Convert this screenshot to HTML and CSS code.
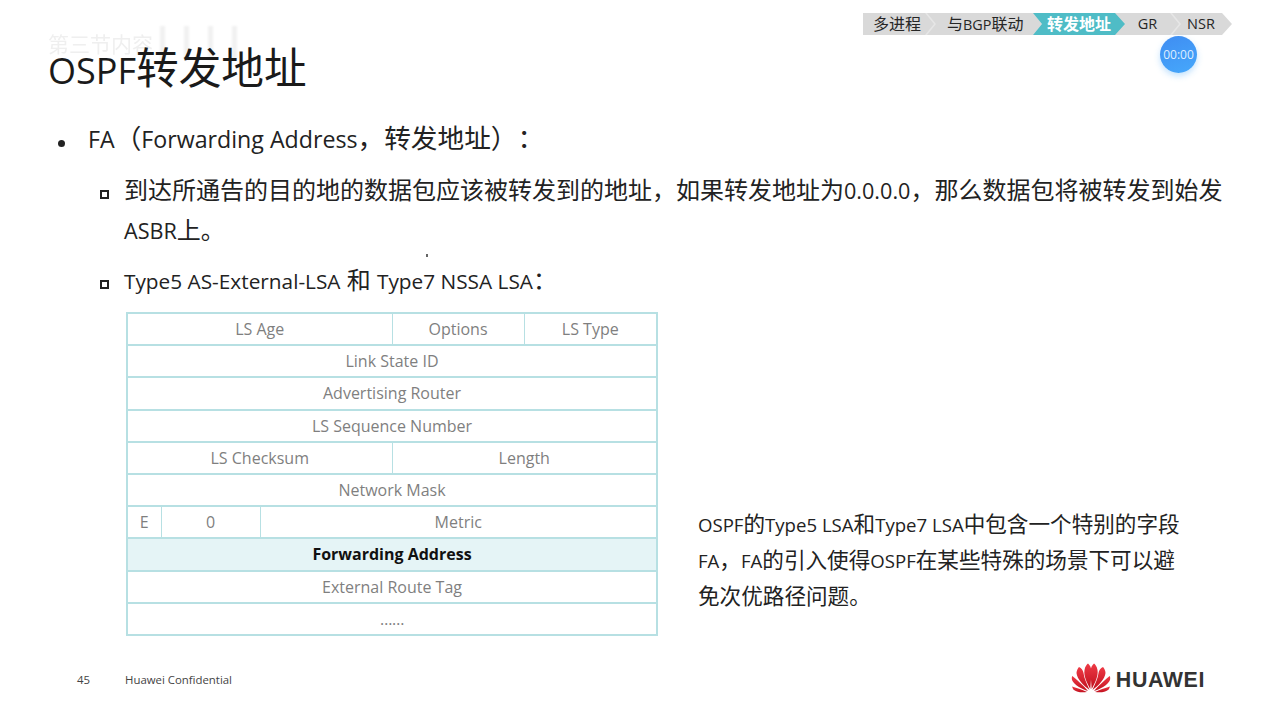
FILE: index.html
```html
<!DOCTYPE html>
<html lang="zh-CN">
<head>
<meta charset="utf-8">
<title>OSPF转发地址</title>
<link rel="stylesheet" href="styles.css">
</head>
<body>
<main class="slide">
  <nav class="crumbs">
    <span class="crumb c1">多进程</span>
    <span class="crumb c2">与<span class="lat">BGP</span>联动</span>
    <span class="crumb c3 active">转发地址</span>
    <span class="crumb c4">GR</span>
    <span class="crumb c5">NSR</span>
  </nav>
  <div class="timer">00:00</div>
  <header class="head">
    <div class="ghost">第三节内容</div>
    <div class="ghost-bars"></div>
    <h1 class="title"><span class="lat">OSPF</span>转发地址</h1>
  </header>
  <section class="bullets">
    <p class="l1"><span class="dot"></span><span class="lat">FA</span>（<span class="lat">Forwarding Address</span>，转发地址）：</p>
    <div class="l2 first"><span class="sq"></span><p>到达所通告的目的地的数据包应该被转发到的地址，如果转发地址为<span class="lat">0.0.0.0</span>，那么数据包将被转发到始发<span class="lat">ASBR</span>上。</p></div>
    <div class="l2 second"><span class="sq"></span><p><span class="lat">Type5 AS-External-LSA</span> 和 <span class="lat">Type7 NSSA LSA</span>：</p></div>
  </section>
  <span class="speck"></span>
  <section class="content">
    <table class="lsa">
      <colgroup>
        <col class="w1"><col class="w2"><col class="w3"><col class="w4"><col class="w5">
      </colgroup>
      <tr><td colspan="3">LS Age</td><td>Options</td><td>LS Type</td></tr>
      <tr><td colspan="5">Link State ID</td></tr>
      <tr><td colspan="5">Advertising Router</td></tr>
      <tr><td colspan="5">LS Sequence Number</td></tr>
      <tr><td colspan="3">LS Checksum</td><td colspan="2">Length</td></tr>
      <tr><td colspan="5">Network Mask</td></tr>
      <tr><td>E</td><td>0</td><td colspan="3">Metric</td></tr>
      <tr class="hl"><td colspan="5">Forwarding Address</td></tr>
      <tr><td colspan="5">External Route Tag</td></tr>
      <tr><td colspan="5" class="more">……</td></tr>
    </table>
    <p class="note"><span class="lat">OSPF</span>的<span class="lat">Type5 LSA</span>和<span class="lat">Type7 LSA</span>中包含一个特别的字段<br><span class="lat">FA</span>，<span class="lat">FA</span>的引入使得<span class="lat">OSPF</span>在某些特殊的场景下可以避<br>免次优路径问题。</p>
  </section>
  <footer class="foot">
    <span class="page">45</span>
    <span class="conf">Huawei Confidential</span>
    <div class="logo">
      <svg class="petals" viewBox="0 0 40 30" width="40" height="30" aria-hidden="true">
        <defs>
          <linearGradient id="pg" x1="0" y1="0" x2="0" y2="1">
            <stop offset="0" stop-color="#ee3a45"/>
            <stop offset="1" stop-color="#c0101e"/>
          </linearGradient>
          <g id="half" fill="url(#pg)">
            <path d="M20.7 26C24 20 27.5 13 26.5 7C26 3.5 24 1 23 .5C21 2 19.5 5 19.6 9C19.8 15 20.3 20 20.7 26Z"/>
            <path d="M21.5 27C27 23 34 16 34.5 10C34.5 7.5 33 5 32 4C29.5 5 27.8 7.5 27.5 10C27 15 24 21 21.5 27Z"/>
            <path d="M23 28C29 26 37 22 39 17C39.5 15 39 13.5 38.7 13C35 16 28 22 23 28Z"/>
            <path d="M24 29C29 29.5 34 29.5 37 27C38 26 38.7 24.5 39 23.5C34 25 28 27 24 29Z"/>
          </g>
        </defs>
        <use href="#half"/>
        <use href="#half" transform="matrix(-1 0 0 1 40 0)"/>
      </svg>
      <span class="brand">HUAWEI</span>
    </div>
  </footer>
</main>
</body>
</html>
```
FILE: styles.css
```css
* { box-sizing: border-box; }
html, body { margin: 0; padding: 0; background: #fff; }
body {
  font-family: "Open Sans", "Noto Sans CJK SC", sans-serif;
  color: #222;
  text-spacing-trim: space-all;
}
p, h1 { margin: 0; }
.lat { line-height: 1; }
.slide {
  position: relative;
  width: 1280px;
  height: 720px;
  overflow: hidden;
  background: #fff;
  padding: 0 48px;
}

/* top-right chevron navigator */
.crumbs {
  position: absolute;
  left: 863px;
  top: 13px;
  width: 369px;
  height: 22px;
  display: flex;
  background: #d9d9d9;
  clip-path: polygon(0 0, calc(100% - 10px) 0, 100% 50%, calc(100% - 10px) 100%, 0 100%);
  font-size: 16px;
  line-height: 22px;
  color: #262626;
}
.crumbs .lat { font-size: 14.4px; }
.crumb {
  position: relative;
  display: block;
  text-align: center;
  white-space: nowrap;
}
.crumb::after {
  content: "";
  position: absolute;
  right: -11px;
  top: 0;
  width: 11px;
  height: 22px;
  background: #e6e6e6;
  clip-path: polygon(0 0, 2px 0, 11px 50%, 2px 100%, 0 100%, 9px 50%);
}
.c1 { width: 62px; padding-left: 10px; text-align: left; }
.c2 { width: 108px; padding-left: 22px; text-align: left; }
.c3 { width: 92px; }
.c4 { width: 45px; font-size: 14.5px; }
.c5 { width: 62px; font-size: 14.5px; }
.c5::after { display: none; }
.active {
  z-index: 1;
  color: #fff;
  font-weight: 700;
  background: #4fbcc6;
  clip-path: polygon(0 0, calc(100% - 10px) 0, 100% 50%, calc(100% - 10px) 100%, 0 100%, 9px 50%);
}
.active::after { display: none; }

.timer {
  position: absolute;
  left: 1160px;
  top: 36px;
  width: 37px;
  height: 37px;
  border-radius: 50%;
  background: linear-gradient(160deg, #3f8df2, #46a8fb);
  box-shadow: 0 3px 6px rgba(120, 190, 250, .45);
  color: #dfeeff;
  font-size: 12px;
  line-height: 37px;
  text-align: center;
}

/* title */
.head {
  position: relative;
  height: 101px;
  padding-top: 40px;
}
.ghost {
  position: absolute;
  left: 0;
  top: 30px;
  font-size: 21px;
  line-height: 28px;
  color: #efefef;
  filter: blur(.6px);
}
.ghost-bars {
  position: absolute;
  left: 112px;
  top: 26px;
  width: 92px;
  height: 34px;
  background: repeating-linear-gradient(90deg, #f1f1f1 0 5px, #fff 5px 24px);
  filter: blur(1px);
}
.title {
  position: relative;
  font-size: 42.67px;
  line-height: 56px;
  font-weight: 400;
  color: #1a1a1a;
}
.title .lat { font-size: 36px; }

/* bullets */
.bullets { font-size: 24px; line-height: 40px; color: #222; }
.l1 { position: relative; padding-left: 40px; height: 54px; font-size: 26.67px; line-height: 74px; }
.l1 .lat { font-size: 23.2px; }
.dot {
  position: absolute;
  left: 10px;
  top: 39px;
  width: 7px;
  height: 7px;
  border-radius: 50%;
  background: #222;
}
.l2 { display: flex; padding-left: 52px; }
.l2 p { width: 1110px; margin-left: 15px; }
.l2 .lat { font-size: 21.6px; }
.l2.second .lat { font-size: 20.8px; }
.first { margin-top: 15px; }
.second { margin-top: 10px; }
.sq {
  flex: none;
  width: 9px;
  height: 9px;
  margin-top: 20px;
  border: 2px solid #222;
}
.speck {
  position: absolute;
  left: 426px;
  top: 254px;
  width: 2px;
  height: 3px;
  background: #666;
}

/* LSA table + note */
.content { display: flex; margin-top: 12px; padding-left: 78px; }
.lsa {
  flex: none;
  width: 530px;
  height: 322px;
  table-layout: fixed;
  border-collapse: collapse;
  font-size: 16px;
  color: #7f7f7f;
  text-align: center;
}
.w1 { width: 34px; }
.w2 { width: 99px; }
.w3 { width: 132px; }
.w4 { width: 132px; }
.w5 { width: 133px; }
.lsa td {
  height: 32.2px;
  padding: 0;
  border: 2px solid #b7e0e3;
  border-left-width: 1px;
  border-right-width: 1px;
  white-space: nowrap;
}
.lsa td:first-child { border-left-width: 2px; }
.lsa td:last-child { border-right-width: 2px; }
.hl td { background: #e5f4f6; color: #111; font-weight: 700; }
.more { letter-spacing: -.4px; }
.note {
  flex: none;
  width: 500px;
  margin: 194px 0 0 40px;
  font-size: 21.6px;
  line-height: 36px;
  color: #222;
}
.note .lat { font-size: 18.6px; }

/* footer */
.foot {
  position: absolute;
  left: 0;
  right: 0;
  bottom: 21px;
  height: 40px;
  display: flex;
  align-items: center;
  font-size: 11.4px;
  color: #444;
}
.page { margin-left: 77px; width: 48px; }
.conf { flex: 1; }
.logo { display: flex; align-items: center; gap: 5px; margin-right: 75px; }
.petals { margin-top: -3px; }
.brand {
  font-family: "Liberation Sans", sans-serif;
  font-size: 21.4px;
  font-weight: 700;
  letter-spacing: .6px;
  line-height: 24px;
  margin-top: 2px;
  color: #333;
}
```
